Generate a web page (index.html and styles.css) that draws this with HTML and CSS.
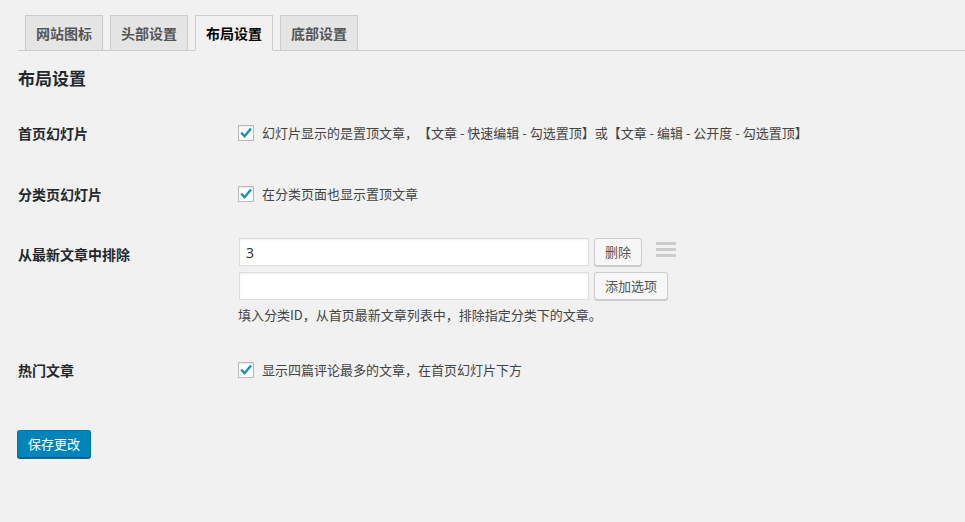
FILE: index.html
```html
<!DOCTYPE html>
<html lang="zh-CN">
<head>
<meta charset="utf-8">
<title>布局设置</title>
<link rel="stylesheet" href="styles.css">
</head>
<body>
<div class="wrap">
  <nav class="tabs">
    <a class="tab">网站图标</a>
    <a class="tab">头部设置</a>
    <a class="tab active">布局设置</a>
    <a class="tab">底部设置</a>
  </nav>
  <h2 class="title">布局设置</h2>
  <div class="form">
    <div class="row row-first">
      <div class="th">首页幻灯片</div>
      <div class="td">
        <label class="check"><span class="box"><svg viewBox="0 0 16 16" width="16" height="16"><path d="M3.2 7.6 L6.6 11.2 L13 3.4" fill="none" stroke="#1e8cbe" stroke-width="2.4"/></svg></span>幻灯片显示的是置顶文章，【文章 - 快速编辑 - 勾选置顶】或【文章 - 编辑 - 公开度 - 勾选置顶】</label>
      </div>
    </div>
    <div class="row">
      <div class="th">分类页幻灯片</div>
      <div class="td">
        <label class="check"><span class="box"><svg viewBox="0 0 16 16" width="16" height="16"><path d="M3.2 7.6 L6.6 11.2 L13 3.4" fill="none" stroke="#1e8cbe" stroke-width="2.4"/></svg></span>在分类页面也显示置顶文章</label>
      </div>
    </div>
    <div class="row row-fields">
      <div class="th th-input">从最新文章中排除</div>
      <div class="td">
        <div class="field-line">
          <input class="text" type="text" value="3">
          <button class="btn">删除</button>
          <span class="handle"><i></i><i></i><i></i></span>
        </div>
        <div class="field-line">
          <input class="text" type="text" value="">
          <button class="btn">添加选项</button>
        </div>
        <p class="desc">填入分类ID，从首页最新文章列表中，排除指定分类下的文章。</p>
      </div>
    </div>
    <div class="row">
      <div class="th">热门文章</div>
      <div class="td">
        <label class="check"><span class="box"><svg viewBox="0 0 16 16" width="16" height="16"><path d="M3.2 7.6 L6.6 11.2 L13 3.4" fill="none" stroke="#1e8cbe" stroke-width="2.4"/></svg></span>显示四篇评论最多的文章，在首页幻灯片下方</label>
      </div>
    </div>
  </div>
  <div class="submit">
    <button class="btn-primary">保存更改</button>
  </div>
</div>
</body>
</html>
```

FILE: styles.css
```css
html, body {
  margin: 0;
  padding: 0;
  background: #f1f1f1;
}
body {
  font-family: "Noto Sans CJK SC", "Noto Sans", "Liberation Sans", sans-serif;
  font-size: 13px;
  color: #444;
  width: 965px;
  height: 522px;
  overflow: hidden;
  text-spacing-trim: space-all;
}
.wrap {
  padding-left: 18px;
}
.tabs {
  display: flex;
  gap: 7px;
  padding: 15px 0 0 7px;
  border-bottom: 1px solid #ccc;
  height: 35px;
  box-sizing: content-box;
}
.tab {
  display: block;
  box-sizing: border-box;
  height: 36px;
  padding: 0 10px;
  border: 1px solid #ccc;
  background: #e5e5e5;
  color: #555;
  font-size: 14px;
  font-weight: bold;
  line-height: 34px;
}
.tab.active {
  background: #f1f1f1;
  color: #000;
  border-bottom-color: #f1f1f1;
}
.title {
  margin: 15px 0 0;
  font-size: 17px;
  line-height: 24px;
  font-weight: bold;
  color: #23282d;
}
.form {
  display: flex;
  flex-direction: column;
  margin-top: 16px;
}
.row {
  display: grid;
  grid-template-columns: 220px 1fr;
  padding: 17px 0;
}
.row-first {
  padding-bottom: 24px;
}
.row-fields {
  padding-bottom: 18px;
}
.th {
  font-size: 14px;
  font-weight: bold;
  color: #23282d;
  line-height: 20px;
}
.th-input {
  padding-top: 6px;
}
.td {
  line-height: 20px;
}
.check {
  display: flex;
  align-items: center;
  gap: 8px;
  line-height: 20px;
  color: #444;
}
.box {
  display: block;
  box-sizing: border-box;
  width: 16px;
  height: 16px;
  border: 1px solid #b4b9be;
  background: #fff;
  box-shadow: inset 0 1px 2px rgba(0,0,0,.1);
  position: relative;
}
.box svg {
  position: absolute;
  left: -1px;
  top: -1px;
}
.field-line {
  display: flex;
  align-items: center;
  height: 28px;
  margin-left: 1px;
}
.field-line + .field-line {
  margin-top: 6px;
}
.text {
  box-sizing: border-box;
  width: 350px;
  height: 28px;
  margin: 0;
  padding: 0 6px;
  border: 1px solid #ddd;
  background: #fff;
  box-shadow: inset 0 1px 2px rgba(0,0,0,.07);
  font-family: "Noto Sans", "Noto Sans CJK SC", sans-serif;
  font-size: 14px;
  color: #32373c;
  outline: none;
}
.btn {
  box-sizing: border-box;
  height: 28px;
  margin: -1px 0 0 5px;
  padding: 0 10px;
  border: 1px solid #ccc;
  border-radius: 3px;
  background: #f7f7f7;
  box-shadow: 0 1px 0 #ccc;
  color: #555;
  font-family: "Noto Sans CJK SC", sans-serif;
  font-size: 13px;
  line-height: 26px;
}
.handle {
  display: flex;
  flex-direction: column;
  gap: 3px;
  width: 20px;
  margin-left: 14px;
  margin-top: -6px;
}
.handle i {
  display: block;
  height: 3px;
  background: #ccc;
}
.desc {
  margin: 5px 0 0;
  line-height: 20px;
  color: #444;
}
.submit {
  padding-top: 33px;
}
.btn-primary {
  box-sizing: border-box;
  height: 28px;
  margin-left: -1px;
  padding: 0 10px;
  border: 1px solid #0073aa;
  border-bottom-color: #006799;
  border-radius: 3px;
  background: #0085ba;
  box-shadow: 0 1px 0 #006799;
  color: #fff;
  font-family: "Noto Sans CJK SC", sans-serif;
  font-size: 13px;
  line-height: 26px;
}
```
